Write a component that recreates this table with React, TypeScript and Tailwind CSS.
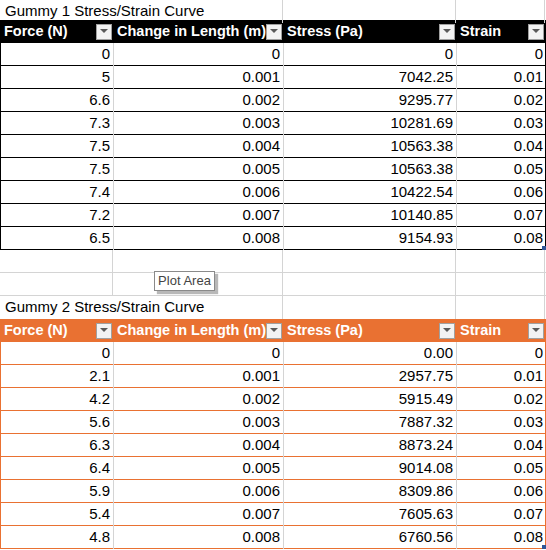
import { ReactNode } from 'react';

const cols = 'grid grid-cols-[113px_170px_173px_89px]';

const gummy1 = [
  ['0', '0', '0', '0'],
  ['5', '0.001', '7042.25', '0.01'],
  ['6.6', '0.002', '9295.77', '0.02'],
  ['7.3', '0.003', '10281.69', '0.03'],
  ['7.5', '0.004', '10563.38', '0.04'],
  ['7.5', '0.005', '10563.38', '0.05'],
  ['7.4', '0.006', '10422.54', '0.06'],
  ['7.2', '0.007', '10140.85', '0.07'],
  ['6.5', '0.008', '9154.93', '0.08'],
];

const gummy2 = [
  ['0', '0', '0.00', '0'],
  ['2.1', '0.001', '2957.75', '0.01'],
  ['4.2', '0.002', '5915.49', '0.02'],
  ['5.6', '0.003', '7887.32', '0.03'],
  ['6.3', '0.004', '8873.24', '0.04'],
  ['6.4', '0.005', '9014.08', '0.05'],
  ['5.9', '0.006', '8309.86', '0.06'],
  ['5.4', '0.007', '7605.63', '0.07'],
  ['4.8', '0.008', '6760.56', '0.08'],
];

const headers = ['Force (N)', 'Change in Length (m)', 'Stress (Pa)', 'Strain'];

function FilterButton() {
  return (
    <div className="w-4 h-4 shrink-0 bg-[#f3f3f3] border border-[#a0a0a0] flex items-center justify-center">
      <svg width="8" height="5" viewBox="0 0 8 5">
        <path d="M0 0 L8 0 L4 4 Z" fill="#5a5a5a" />
      </svg>
    </div>
  );
}

function HeaderRow({ bg }: { bg: string }) {
  return (
    <div className={`${cols} h-[23px] ${bg}`}>
      {headers.map((h) => (
        <div key={h} className="flex items-center justify-between pl-[4px] pr-[1px] text-white font-bold text-[14.5px]">
          <span>{h}</span>
          <FilterButton />
        </div>
      ))}
    </div>
  );
}

function DataRows({ rows, line }: { rows: string[][]; line: string }) {
  return (
    <>
      {rows.map((r, i) => (
        <div key={i} className={`${cols} h-[23px] border-b border-l border-r ${line} relative`}>
          {r.map((v, j) => (
            <div
              key={j}
              className={`flex items-center justify-end pr-[3px] text-[15px] text-black ${j < 3 ? 'border-r border-[#d4d4d4]' : ''}`}
            >
              {v}
            </div>
          ))}
          {i === rows.length - 1 && (
            <div className="absolute right-[-1px] bottom-[-1px] w-[4px] h-[4px] bg-[#2f5597]" />
          )}
        </div>
      ))}
    </>
  );
}

function BlankRow({ children }: { children?: ReactNode }) {
  return (
    <div className={`${cols} h-[23px] border-b border-[#d4d4d4] relative`}>
      <div className="border-r border-[#d4d4d4]" />
      <div className="border-r border-[#d4d4d4]" />
      <div className="border-r border-[#d4d4d4]" />
      <div className="border-r border-[#d4d4d4]" />
      {children}
    </div>
  );
}

function TitleRow({ text, h }: { text: string; h: string }) {
  return (
    <div className={`${cols} ${h}`}>
      <div className="col-span-2 border-r border-[#d4d4d4] flex items-center pl-[5px] text-[15px] text-black whitespace-nowrap">
        {text}
      </div>
      <div className="border-r border-[#d4d4d4]" />
      <div className="border-r border-[#d4d4d4]" />
    </div>
  );
}

export default function App() {
  return (
    <div className="w-[546px] h-[550px] overflow-hidden bg-white font-['Liberation_Sans',Arial,sans-serif]">
      <TitleRow text="Gummy 1 Stress/Strain Curve" h="h-[20px]" />
      <HeaderRow bg="bg-black" />
      <DataRows rows={gummy1} line="border-black" />
      <BlankRow />
      <BlankRow>
        <div className="absolute left-[154px] top-[-2px] w-[61px] h-[20px] flex items-center justify-center bg-white border border-[#8a8a8a] shadow-[3px_3px_1px_#b8b8b8] text-[13px] text-[#444]">
          Plot Area
        </div>
      </BlankRow>
      <TitleRow text="Gummy 2 Stress/Strain Curve" h="h-[23px]" />
      <HeaderRow bg="bg-[#e97132]" />
      <DataRows rows={gummy2} line="border-[#e97132]" />
    </div>
  );
}
